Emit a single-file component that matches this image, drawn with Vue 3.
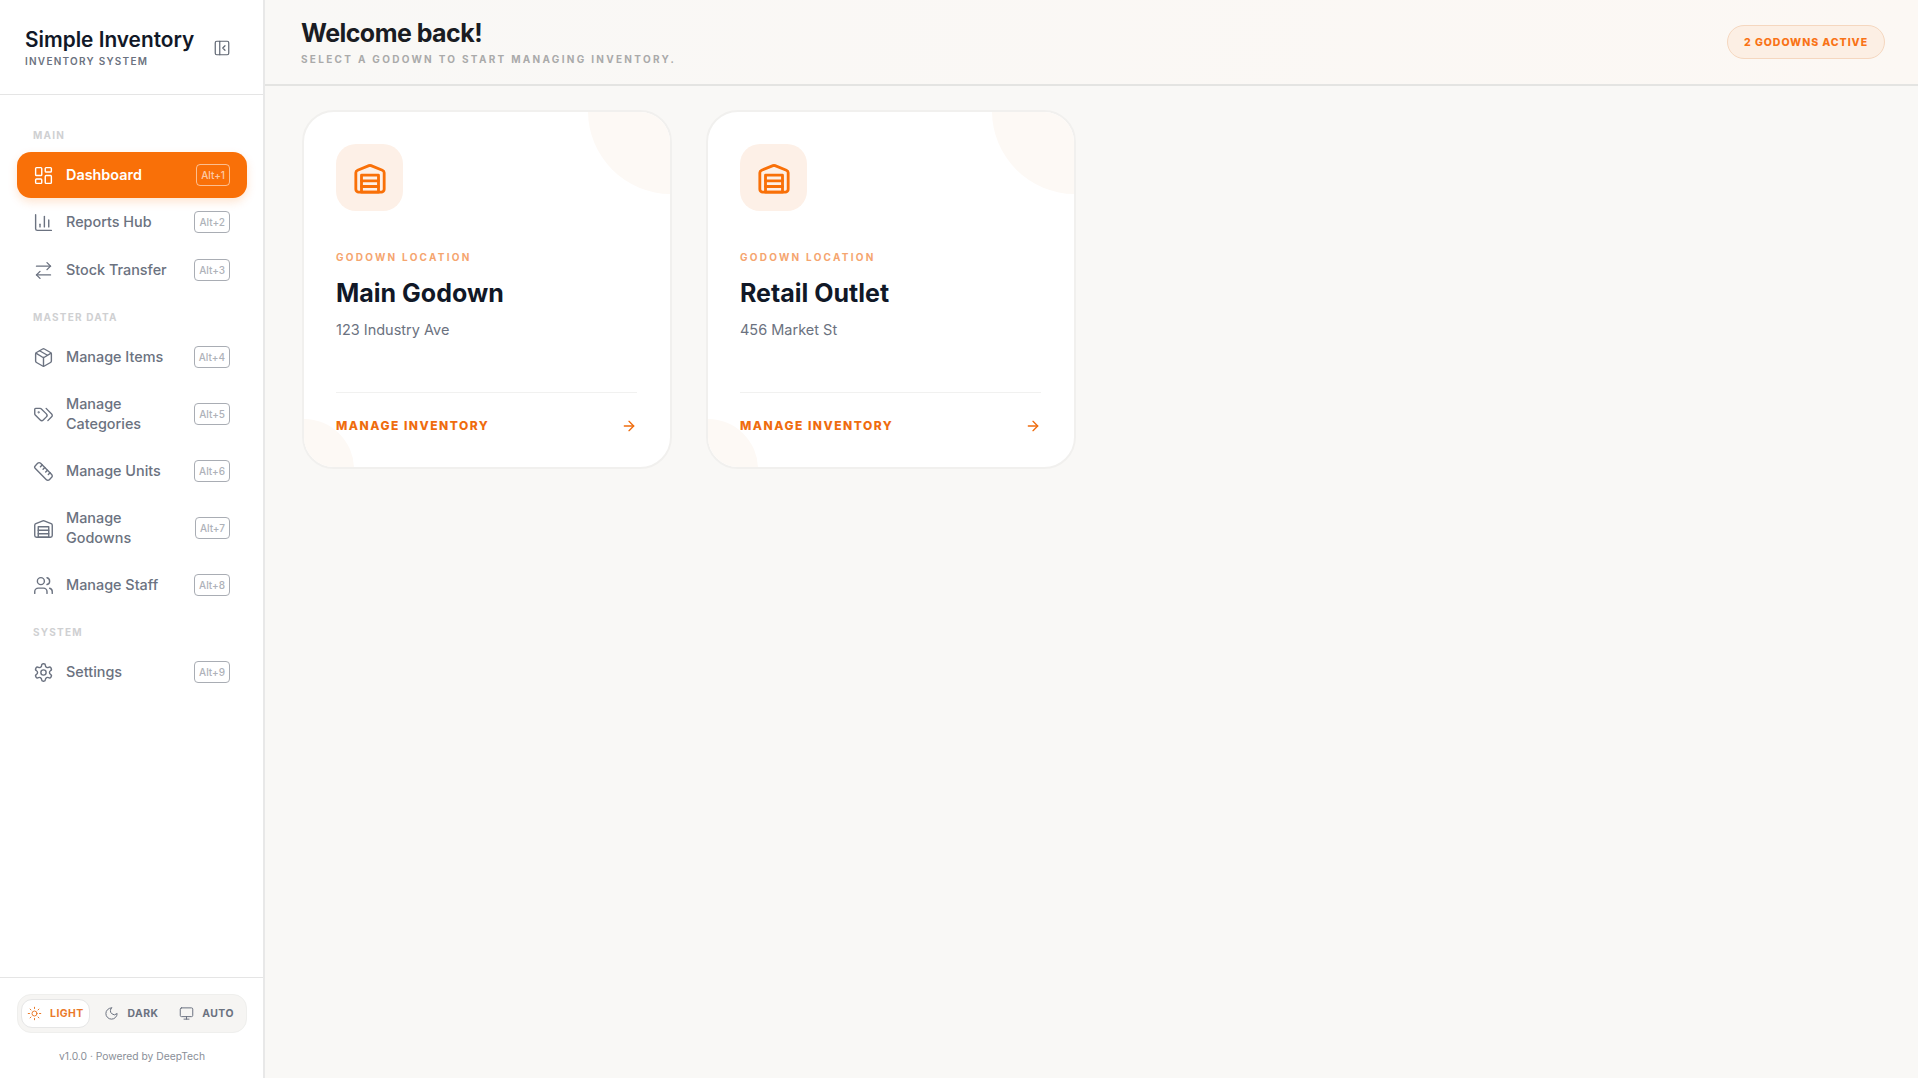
<script setup>
const icons = {
  dashboard: [
    ["rect", { width: 7, height: 9, x: 3, y: 3, rx: 1 }],
    ["rect", { width: 7, height: 5, x: 14, y: 3, rx: 1 }],
    ["rect", { width: 7, height: 9, x: 14, y: 12, rx: 1 }],
    ["rect", { width: 7, height: 5, x: 3, y: 16, rx: 1 }],
  ],
  chart: [
    ["path", { d: "M3 3v16a2 2 0 0 0 2 2h16" }],
    ["path", { d: "M18 17V9" }],
    ["path", { d: "M13 17V5" }],
    ["path", { d: "M8 17v-3" }],
  ],
  transfer: [
    ["path", { d: "m16 3 4 4-4 4" }],
    ["path", { d: "M20 7H4" }],
    ["path", { d: "m8 21-4-4 4-4" }],
    ["path", { d: "M4 17h16" }],
  ],
  box: [
    ["path", { d: "M11 21.73a2 2 0 0 0 2 0l7-4A2 2 0 0 0 21 16V8a2 2 0 0 0-1-1.73l-7-4a2 2 0 0 0-2 0l-7 4A2 2 0 0 0 3 8v8a2 2 0 0 0 1 1.73z" }],
    ["path", { d: "M12 22V12" }],
    ["path", { d: "m3.3 7 7.703 4.734a2 2 0 0 0 1.994 0L20.7 7" }],
    ["path", { d: "m7.5 4.27 9 5.15" }],
  ],
  tags: [
    ["path", { d: "m15 5 6.3 6.3a2.4 2.4 0 0 1 0 3.4L17 19" }],
    ["path", { d: "M9.586 5.586A2 2 0 0 0 8.172 5H3a1 1 0 0 0-1 1v5.172a2 2 0 0 0 .586 1.414L8.29 18.29a2.426 2.426 0 0 0 3.42 0l3.58-3.58a2.426 2.426 0 0 0 0-3.42z" }],
    ["circle", { cx: 6.5, cy: 9.5, r: 0.5 }],
  ],
  ruler: [
    ["path", { d: "M21.3 15.3a2.4 2.4 0 0 1 0 3.4l-2.6 2.6a2.4 2.4 0 0 1-3.4 0L2.7 8.7a2.41 2.41 0 0 1 0-3.4l2.6-2.6a2.41 2.41 0 0 1 3.4 0Z" }],
    ["path", { d: "m14.5 12.5 2-2" }],
    ["path", { d: "m11.5 9.5 2-2" }],
    ["path", { d: "m8.5 6.5 2-2" }],
    ["path", { d: "m17.5 15.5 2-2" }],
  ],
  warehouse: [
    ["path", { d: "M22 8.35V20a2 2 0 0 1-2 2H4a2 2 0 0 1-2-2V8.35A2 2 0 0 1 3.26 6.5l8-3.2a2 2 0 0 1 1.48 0l8 3.2A2 2 0 0 1 22 8.35Z" }],
    ["path", { d: "M6 18h12" }],
    ["path", { d: "M6 14h12" }],
    ["rect", { width: 12, height: 12, x: 6, y: 10 }],
  ],
  users: [
    ["path", { d: "M16 21v-2a4 4 0 0 0-4-4H6a4 4 0 0 0-4 4v2" }],
    ["circle", { cx: 9, cy: 7, r: 4 }],
    ["path", { d: "M22 21v-2a4 4 0 0 0-3-3.87" }],
    ["path", { d: "M16 3.13a4 4 0 0 1 0 7.75" }],
  ],
  settings: [
    ["path", { d: "M12.22 2h-.44a2 2 0 0 0-2 2v.18a2 2 0 0 1-1 1.73l-.43.25a2 2 0 0 1-2 0l-.15-.08a2 2 0 0 0-2.73.73l-.22.38a2 2 0 0 0 .73 2.73l.15.1a2 2 0 0 1 1 1.72v.51a2 2 0 0 1-1 1.74l-.15.09a2 2 0 0 0-.73 2.73l.22.38a2 2 0 0 0 2.73.73l.15-.08a2 2 0 0 1 2 0l.43.25a2 2 0 0 1 1 1.73V20a2 2 0 0 0 2 2h.44a2 2 0 0 0 2-2v-.18a2 2 0 0 1 1-1.73l.43-.25a2 2 0 0 1 2 0l.15.08a2 2 0 0 0 2.73-.73l.22-.39a2 2 0 0 0-.73-2.73l-.15-.08a2 2 0 0 1-1-1.74v-.5a2 2 0 0 1 1-1.74l.15-.09a2 2 0 0 0 .73-2.73l-.22-.38a2 2 0 0 0-2.73-.73l-.15.08a2 2 0 0 1-2 0l-.43-.25a2 2 0 0 1-1-1.73V4a2 2 0 0 0-2-2z" }],
    ["circle", { cx: 12, cy: 12, r: 3 }],
  ],
  sun: [
    ["circle", { cx: 12, cy: 12, r: 4 }],
    ["path", { d: "M12 2v2M12 20v2m-7.07-17.07 1.41 1.41m11.32 11.32 1.41 1.41M2 12h2m16 0h2M6.34 17.66l-1.41 1.41M19.07 4.93l-1.41 1.41" }],
  ],
  moon: [["path", { d: "M12 3a6 6 0 0 0 9 9 9 9 0 1 1-9-9Z" }]],
  monitor: [
    ["rect", { width: 20, height: 14, x: 2, y: 3, rx: 2 }],
    ["path", { d: "M8 21h8" }],
    ["path", { d: "M12 17v4" }],
  ],
  arrow: [
    ["path", { d: "M5 12h14" }],
    ["path", { d: "m12 5 7 7-7 7" }],
  ],
  panel: [
    ["rect", { width: 18, height: 18, x: 3, y: 3, rx: 2 }],
    ["path", { d: "M9 3v18" }],
    ["path", { d: "m16 15-3-3 3-3" }],
  ],
};

const navGroups = [
  {
    title: "Main",
    items: [
      { label: "Dashboard", icon: "dashboard", key: "Alt+1", active: true },
      { label: "Reports Hub", icon: "chart", key: "Alt+2" },
      { label: "Stock Transfer", icon: "transfer", key: "Alt+3" },
    ],
  },
  {
    title: "Master Data",
    items: [
      { label: "Manage Items", icon: "box", key: "Alt+4" },
      { label: "Manage Categories", icon: "tags", key: "Alt+5" },
      { label: "Manage Units", icon: "ruler", key: "Alt+6" },
      { label: "Manage Godowns", icon: "warehouse", key: "Alt+7" },
      { label: "Manage Staff", icon: "users", key: "Alt+8" },
    ],
  },
  {
    title: "System",
    items: [{ label: "Settings", icon: "settings", key: "Alt+9" }],
  },
];

const themes = [
  { label: "Light", icon: "sun", active: true },
  { label: "Dark", icon: "moon" },
  { label: "Auto", icon: "monitor" },
];

const godowns = [
  { name: "Main Godown", address: "123 Industry Ave" },
  { name: "Retail Outlet", address: "456 Market St" },
];
</script>

<template>
  <div class="app">
    <aside class="sidebar">
      <div class="brand">
        <div>
          <div class="brand-name">Simple Inventory</div>
          <div class="brand-sub">Inventory System</div>
        </div>
        <svg class="icon collapse" viewBox="0 0 24 24">
          <component :is="el[0]" v-for="(el, i) in icons.panel" :key="i" v-bind="el[1]" />
        </svg>
      </div>

      <nav class="nav">
        <section v-for="group in navGroups" :key="group.title" class="nav-group">
          <h4 class="nav-title">{{ group.title }}</h4>
          <a
            v-for="item in group.items"
            :key="item.label"
            class="nav-item"
            :class="{ active: item.active }"
          >
            <svg class="icon nav-icon" viewBox="0 0 24 24">
              <component :is="el[0]" v-for="(el, i) in icons[item.icon]" :key="i" v-bind="el[1]" />
            </svg>
            <span class="nav-label">{{ item.label }}</span>
            <kbd class="nav-key">{{ item.key }}</kbd>
          </a>
        </section>
      </nav>

      <div class="sidebar-foot">
        <div class="theme-switch">
          <button
            v-for="theme in themes"
            :key="theme.label"
            class="theme-btn"
            :class="{ active: theme.active }"
          >
            <svg class="icon theme-icon" viewBox="0 0 24 24">
              <component :is="el[0]" v-for="(el, i) in icons[theme.icon]" :key="i" v-bind="el[1]" />
            </svg>
            {{ theme.label }}
          </button>
        </div>
        <p class="version">v1.0.0 · Powered by DeepTech</p>
      </div>
    </aside>

    <main class="main">
      <header class="topbar">
        <div>
          <h1 class="welcome">Welcome back!</h1>
          <p class="welcome-sub">Select a godown to start managing inventory.</p>
        </div>
        <span class="active-pill">2 Godowns Active</span>
      </header>

      <div class="cards">
        <article v-for="godown in godowns" :key="godown.name" class="card">
          <span class="blob blob-top"></span>
          <span class="blob blob-bottom"></span>
          <div class="card-icon">
            <svg class="icon" viewBox="0 0 24 24">
              <component :is="el[0]" v-for="(el, i) in icons.warehouse" :key="i" v-bind="el[1]" />
            </svg>
          </div>
          <div class="card-label">Godown Location</div>
          <h2 class="card-name">{{ godown.name }}</h2>
          <p class="card-address">{{ godown.address }}</p>
          <div class="card-foot">
            <span>Manage Inventory</span>
            <svg class="icon card-arrow" viewBox="0 0 24 24">
              <component :is="el[0]" v-for="(el, i) in icons.arrow" :key="i" v-bind="el[1]" />
            </svg>
          </div>
        </article>
      </div>
    </main>
  </div>
</template>

<style>
html,
body {
  margin: 0;
  background: #f9f8f6;
}
</style>

<style scoped>
* {
  box-sizing: border-box;
}

.app {
  display: flex;
  height: 1078px;
  font-family: Inter, "Liberation Sans", sans-serif;
  color: #111827;
  overflow: hidden;
}

.icon {
  fill: none;
  stroke: currentColor;
  stroke-width: 2;
  stroke-linecap: round;
  stroke-linejoin: round;
  flex-shrink: 0;
}

.sidebar {
  width: 265px;
  flex-shrink: 0;
  display: flex;
  flex-direction: column;
  background: #fff;
  border-right: 2px solid #e8e8e8;
}

.brand {
  height: 95px;
  display: flex;
  align-items: center;
  padding: 1px 32px 0 25px;
  justify-content: space-between;
  border-bottom: 1px solid #e5e5e5;
}

.brand-name {
  font-size: 20.8px;
  font-weight: 600;
  line-height: 26px;
  color: #111827;
}

.brand-sub {
  margin-top: 1px;
  font-size: 10px;
  font-weight: 600;
  line-height: 14px;
  letter-spacing: 1.25px;
  text-transform: uppercase;
  color: #6b7280;
}

.collapse {
  width: 18px;
  height: 18px;
  stroke-width: 1.6;
  color: #5f6672;
}

.nav {
  flex: 1;
  padding: 16px 16px 0 17px;
}

.nav-title {
  margin: 15px 0 8px;
  padding-left: 16px;
  font-size: 10px;
  font-weight: 700;
  line-height: 18px;
  letter-spacing: 1.2px;
  text-transform: uppercase;
  color: #cfd0d2;
}

.nav-item {
  display: flex;
  align-items: center;
  min-height: 46px;
  margin-bottom: 2px;
  padding: 12px 17px 12px 16px;
  border-radius: 14px;
  font-size: 14.4px;
  line-height: 20px;
  font-weight: 500;
  color: #6b7280;
}

.nav-item.active {
  margin-bottom: 1px;
  background: #f97008;
  color: #fff;
  font-weight: 600;
  box-shadow: 0 4px 10px rgba(249, 112, 8, 0.18);
}

.nav-icon {
  width: 21px;
  height: 21px;
  margin-right: 12px;
  stroke-width: 1.6;
}

.nav-label {
  flex: 1;
  padding-right: 12px;
}

.nav-key {
  flex-shrink: 0;
  height: 22px;
  padding: 0 4px;
  display: flex;
  align-items: center;
  border: 1px solid #a9adb4;
  border-radius: 4px;
  font-family: inherit;
  font-size: 10px;
  font-weight: 500;
  color: #aeb2b9;
}

.nav-item.active .nav-key {
  border-color: rgba(255, 255, 255, 0.55);
  color: rgba(255, 255, 255, 0.65);
}

.sidebar-foot {
  border-top: 1px solid #e5e5e5;
  padding: 16px 16px 0 17px;
  height: 101px;
}

.theme-switch {
  display: flex;
  align-items: center;
  justify-content: space-between;
  height: 39px;
  padding: 0 6px 0 3px;
  background: #f6f5f3;
  border: 1px solid #efefed;
  border-radius: 14px;
}

.theme-btn {
  display: flex;
  align-items: center;
  gap: 8px;
  height: 29px;
  padding: 0 5px;
  border: 1px solid transparent;
  border-radius: 11px;
  background: none;
  font-family: inherit;
  font-size: 10.4px;
  font-weight: 700;
  letter-spacing: 0.5px;
  text-transform: uppercase;
  color: #6b7280;
}

.theme-btn.active {
  background: #fff;
  border-color: #e6e6e6;
  color: #ea7a2a;
}

.theme-icon {
  width: 15px;
  height: 15px;
  stroke-width: 1.6;
}

.version {
  margin: 16px 0 0;
  font-size: 10.3px;
  line-height: 14px;
  text-align: center;
  color: #8a8f98;
}

.main {
  flex: 1;
  min-width: 0;
}

.topbar {
  height: 86px;
  display: flex;
  align-items: center;
  justify-content: space-between;
  padding: 0 33px 0 36px;
  border-bottom: 2px solid #e4e4e2;
  background: linear-gradient(90deg, #f9f8f6, #fcf8f4);
}

.welcome {
  margin: 0;
  font-size: 25px;
  font-weight: 700;
  line-height: 30px;
  letter-spacing: -0.55px;
  color: #1a1c23;
}

.welcome-sub {
  margin: 4px 0 0;
  font-size: 10px;
  font-weight: 700;
  line-height: 14px;
  letter-spacing: 2.3px;
  text-transform: uppercase;
  color: #aaaaaa;
}

.active-pill {
  height: 34px;
  display: flex;
  align-items: center;
  padding: 0 16px;
  border: 1px solid #f5d7bf;
  border-radius: 17px;
  background: #fcefe4;
  font-size: 10.5px;
  font-weight: 800;
  letter-spacing: 0.95px;
  text-transform: uppercase;
  color: #f97316;
}

.cards {
  display: grid;
  grid-template-columns: repeat(auto-fill, 370px);
  gap: 34px;
  padding: 24px 37px;
}

.card {
  position: relative;
  height: 359px;
  padding: 32px 33px 32px 32px;
  overflow: hidden;
  background: #fff;
  border: 2px solid #f1f0ee;
  border-radius: 32px;
  display: flex;
  flex-direction: column;
}

.blob {
  position: absolute;
  border-radius: 50%;
  background: #fdf9f5;
}

.blob-top {
  top: -84px;
  right: -84px;
  width: 166px;
  height: 166px;
}

.blob-bottom {
  bottom: -52px;
  left: -50px;
  width: 100px;
  height: 100px;
}

.card-icon {
  position: relative;
  width: 67px;
  height: 67px;
  display: flex;
  align-items: center;
  justify-content: center;
  border-radius: 20px;
  background: #fdf0e7;
  color: #f97008;
}

.card-icon .icon {
  width: 34px;
  height: 34px;
}

.card-label {
  position: relative;
  margin-top: 39px;
  font-size: 10px;
  font-weight: 700;
  line-height: 14px;
  letter-spacing: 2.25px;
  text-transform: uppercase;
  color: #f5a56f;
}

.card-name {
  position: relative;
  margin: 13px 0 0;
  font-size: 25px;
  font-weight: 700;
  line-height: 32px;
  color: #111827;
}

.card-address {
  position: relative;
  margin: 11px 0 0;
  font-size: 14.5px;
  line-height: 20px;
  color: #6b7280;
}

.card-foot {
  position: relative;
  margin-top: auto;
  display: flex;
  align-items: center;
  justify-content: space-between;
  padding-top: 24px;
  border-top: 1px solid #f1f1f0;
  font-size: 12px;
  font-weight: 800;
  line-height: 18px;
  letter-spacing: 1.5px;
  text-transform: uppercase;
  color: #ef6c0e;
}

.card-arrow {
  width: 16px;
  height: 16px;
  stroke-width: 2;
}
</style>
